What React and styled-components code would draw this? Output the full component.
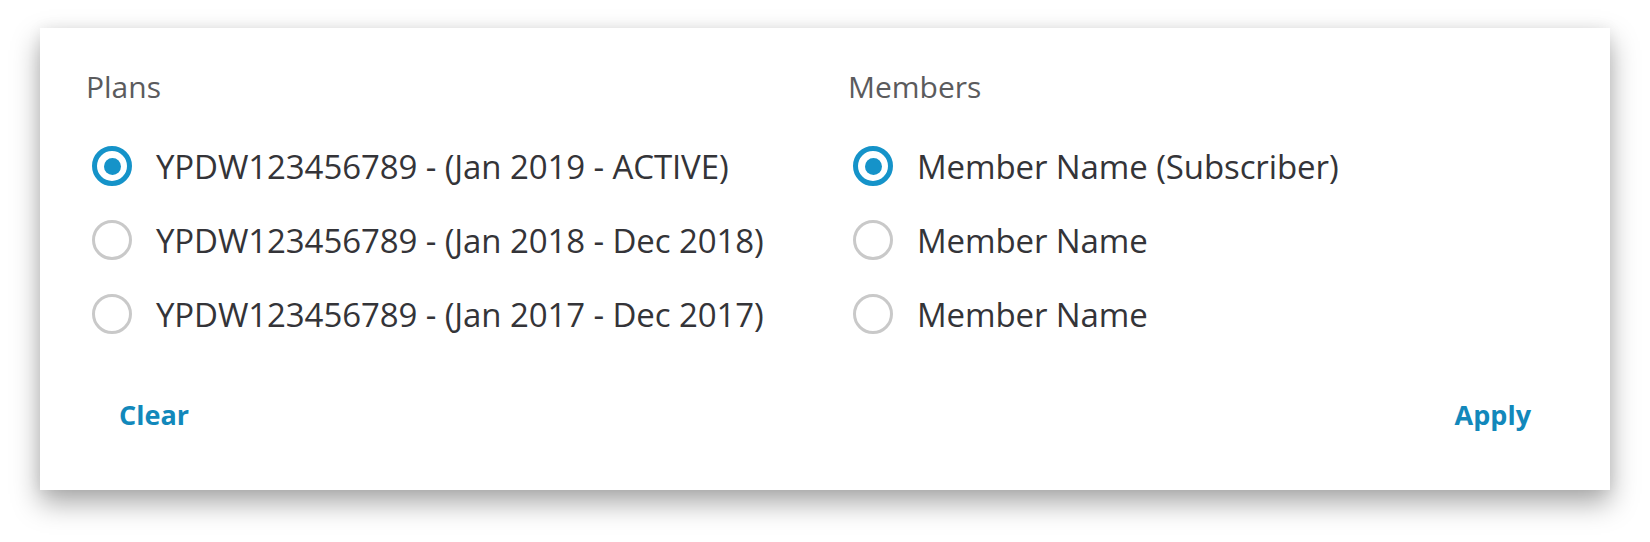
import React, { useState } from "react";
import styled, { createGlobalStyle } from "styled-components";

const GlobalStyle = createGlobalStyle`
  html, body {
    margin: 0;
    padding: 0;
    background: #ffffff;
  }
  body {
    font-family: "Open Sans", "Liberation Sans", Arial, sans-serif;
  }
`;

const Page = styled.div`
  width: 1650px;
  height: 542px;
  padding: 28px 40px 0;
  box-sizing: border-box;
`;

const Card = styled.div`
  width: 1570px;
  height: 462px;
  box-sizing: border-box;
  background: #ffffff;
  box-shadow: 0 13px 26px rgba(0, 0, 0, 0.34), 0 0 14px rgba(0, 0, 0, 0.06);
  padding: 41px 46px 0;
  display: flex;
  flex-direction: column;
`;

const Columns = styled.div`
  display: grid;
  grid-template-columns: 762px 1fr;
`;

const Group = styled.fieldset`
  border: 0;
  margin: 0;
  padding: 0;
  min-width: 0;
`;

const Legend = styled.div`
  font-size: 30px;
  line-height: 36px;
  color: #5b5b5d;
  margin-bottom: 24px;
`;

const Option = styled.label`
  display: flex;
  align-items: center;
  height: 74px;
  gap: 24px;
  padding-left: ${(p) => p.$indent}px;
  cursor: pointer;
  font-size: 33px;
  color: #343438;
  letter-spacing: -0.1px;
`;

const Dot = styled.span`
  flex: none;
  width: 40px;
  height: 40px;
  box-sizing: border-box;
  border-radius: 50%;
  border: ${(p) => (p.$on ? "5.5px solid #1593c9" : "3.5px solid #c9c9c9")};
  display: flex;
  align-items: center;
  justify-content: center;

  &::after {
    content: "";
    width: 17px;
    height: 17px;
    border-radius: 50%;
    background: #1593c9;
    display: ${(p) => (p.$on ? "block" : "none")};
  }
`;

const Footer = styled.div`
  display: flex;
  justify-content: space-between;
  margin-top: 41px;
`;

const TextButton = styled.button`
  border: 0;
  background: none;
  padding: 0 33px;
  font-family: "Open Sans", "Liberation Sans", Arial, sans-serif;
  font-size: 27px;
  font-weight: 700;
  line-height: 46px;
  color: #1288bb;
  cursor: pointer;
`;

const plans = [
  "YPDW123456789 - (Jan 2019 - ACTIVE)",
  "YPDW123456789 - (Jan 2018 - Dec 2018)",
  "YPDW123456789 - (Jan 2017 - Dec 2017)",
];

const members = ["Member Name (Subscriber)", "Member Name", "Member Name"];

const RadioGroup = ({ title, items, value, onChange, indent }) => (
  <Group>
    <Legend>{title}</Legend>
    {items.map((label, i) => (
      <Option key={i} $indent={indent} onClick={() => onChange(i)}>
        <Dot $on={value === i} />
        <span>{label}</span>
      </Option>
    ))}
  </Group>
);

export default function App() {
  const [plan, setPlan] = useState(0);
  const [member, setMember] = useState(0);

  return (
    <Page>
      <GlobalStyle />
      <Card>
        <Columns>
          <RadioGroup title="Plans" items={plans} value={plan} onChange={setPlan} indent={6} />
          <RadioGroup title="Members" items={members} value={member} onChange={setMember} indent={5} />
        </Columns>
        <Footer>
          <TextButton onClick={() => { setPlan(0); setMember(0); }}>Clear</TextButton>
          <TextButton>Apply</TextButton>
        </Footer>
      </Card>
    </Page>
  );
}
